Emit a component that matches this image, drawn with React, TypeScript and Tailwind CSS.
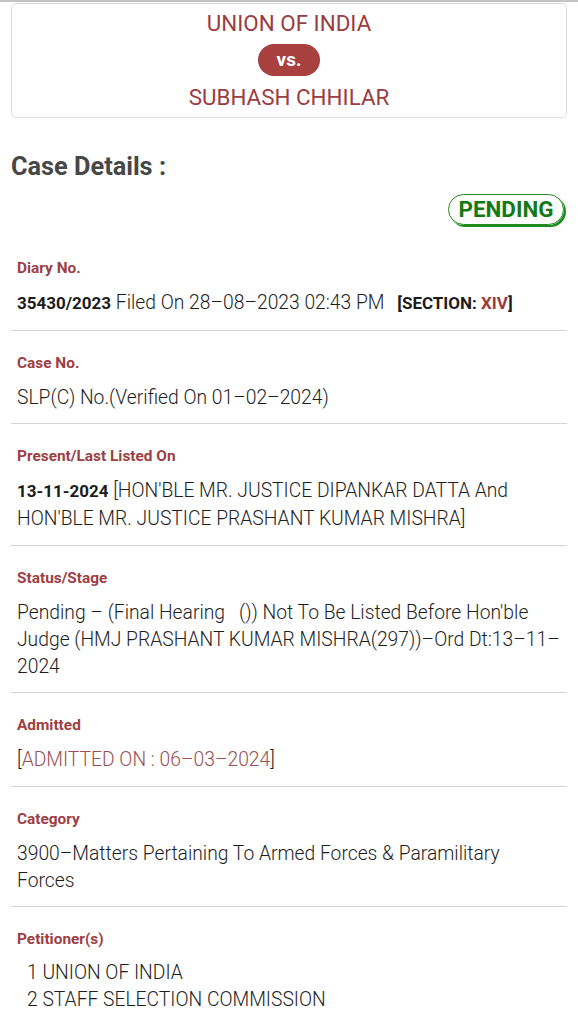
import React from "react";

const font = { fontFamily: "Roboto, 'Noto Sans', sans-serif" };

function Section({ label, children }: { label: string; children: React.ReactNode }) {
  return (
    <div className="border-b border-[#d4d4d4] pt-[22px] pb-[12.5px] px-[6px]">
      <div className="text-[15.4px] leading-[20px] font-bold text-[#9e4043]">{label}</div>
      <div className="mt-[11px] text-[19.3px] leading-[27px] font-light text-[#1e1e1e]">{children}</div>
    </div>
  );
}

export default function App() {
  return (
    <div style={font} className="w-[578px] min-h-[1024px] bg-white overflow-hidden">
      <div className="h-[2px] bg-[#c4c4c4]" />
      <div className="px-[11px]">
        <div className="mt-[1px] border border-[#dcdcdc] rounded-[5px] pt-[7px] pb-[8px] flex flex-col items-center">
          <div className="text-[22.4px] leading-[24px] text-[#9c3d3f]">UNION OF INDIA</div>
          <div className="mt-[9px] w-[62px] h-[32px] rounded-full bg-[#a8403f] text-white font-bold text-[19px] flex items-center justify-center">
            vs.
          </div>
          <div className="mt-[9px] text-[22.4px] leading-[24px] text-[#9c3d3f]">SUBHASH CHHILAR</div>
        </div>

        <div className="mt-[34px] text-[25.3px] leading-[30px] font-bold text-[#474747]">Case Details :</div>

        <div className="mt-[12px] flex justify-end pr-[3px]">
          <div className="h-[31px] w-[116px] rounded-full border-[1.5px] border-[#1e8a1e] shadow-[2px_2px_0_#1e8a1e] flex items-center justify-center text-[22.4px] font-bold text-[#137a13]">
            PENDING
          </div>
        </div>

        <div className="mt-[11px]">
          <Section label="Diary No.">
            <span className="font-bold text-[#1c1c1c] text-[17px]">35430/2023</span> Filed On 28–08–2023 02:43 PM{" "}
            <span className="ml-[8px] font-bold text-[17px] text-[#1c1c1c]">
              [SECTION: <span className="text-[#9e3a3a]">XIV</span>]
            </span>
          </Section>
          <Section label="Case No.">SLP(C) No.(Verified On 01–02–2024)</Section>
          <Section label="Present/Last Listed On">
            <span className="font-bold text-[#1c1c1c] text-[17px]">13-11-2024</span> [HON'BLE MR. JUSTICE DIPANKAR DATTA And HON'BLE MR. JUSTICE PRASHANT KUMAR MISHRA]
          </Section>
          <Section label="Status/Stage">
            Pending – (Final Hearing&nbsp;&nbsp;&nbsp;()) Not To Be Listed Before Hon'ble Judge (HMJ PRASHANT KUMAR MISHRA(297))–Ord Dt:13–11–2024
          </Section>
          <Section label="Admitted">
            [<span className="text-[#9a4f50]">ADMITTED ON : 06–03–2024</span>]
          </Section>
          <Section label="Category">3900–Matters Pertaining To Armed Forces &amp; Paramilitary Forces</Section>
          <div className="pt-[22px] px-[6px]">
            <div className="text-[15.4px] leading-[20px] font-bold text-[#9e4043]">Petitioner(s)</div>
            <div className="mt-[10px] pl-[10px] text-[19.3px] leading-[27px] font-light text-[#1e1e1e]">
              <div>1 UNION OF INDIA</div>
              <div>2 STAFF SELECTION COMMISSION</div>
            </div>
          </div>
        </div>
      </div>
    </div>
  );
}
